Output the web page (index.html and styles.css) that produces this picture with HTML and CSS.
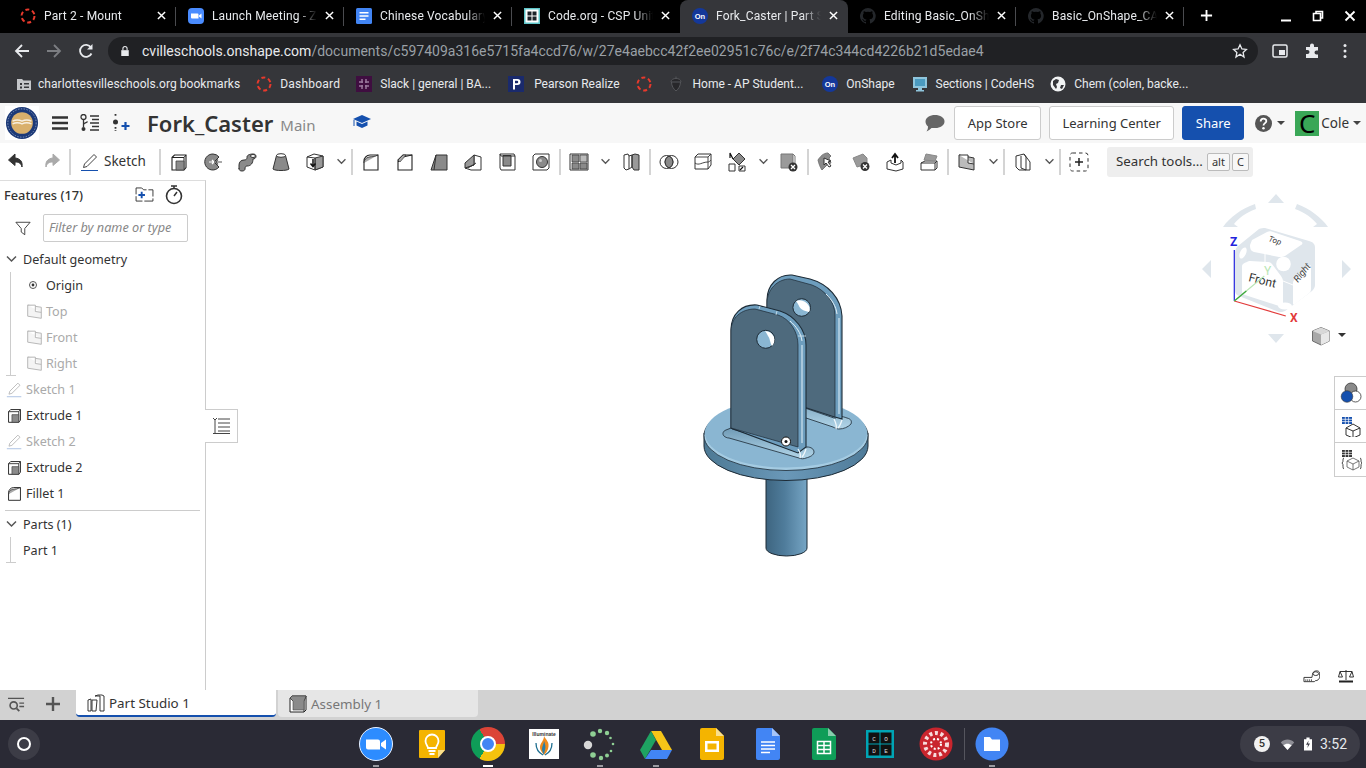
FILE: index.html
```html
<!DOCTYPE html>
<html lang="en">
<head>
<meta charset="utf-8">
<title>Fork_Caster | Part Studio 1</title>
<link rel="stylesheet" href="styles.css">
</head>
<body>
<svg class="defs" width="0" height="0">
  <defs>
    <symbol id="ring" viewBox="0 0 16 16"><circle cx="8" cy="8" r="6.5" fill="none" stroke="#e8392c" stroke-width="2" stroke-dasharray="4 2.8"/></symbol>
    <symbol id="on" viewBox="0 0 16 16"><circle cx="8" cy="8" r="8" fill="#14389a"/><text x="8" y="10.6" text-anchor="middle" class="ontext">On</text></symbol>
    <symbol id="gh" viewBox="0 0 16 16"><path fill="#24272b" d="M8 0a8 8 0 0 0-2.5 15.6c.4.1.5-.2.5-.4v-1.4c-2.200.5-2.700-1-2.700-1-.4-.9-.9-1.200-.9-1.200-.7-.5.1-.5.1-.5.8.1 1.200.8 1.200.8.7 1.200 1.900.9 2.300.7.1-.5.3-.9.5-1.100-1.800-.2-3.600-.9-3.600-4 0-.9.3-1.600.8-2.100-.1-.2-.4-1 .1-2.100 0 0 .7-.2 2.200.8a7.500 7.500 0 0 1 4 0c1.500-1 2.200-.8 2.200-.8.5 1.100.2 1.900.1 2.100.5.6.8 1.300.8 2.100 0 3.100-1.900 3.700-3.700 3.900.3.3.6.8.6 1.500v2.200c0 .2.100.5.500.4A8 8 0 0 0 8 0z"/></symbol>
    <symbol id="x" viewBox="0 0 10 10"><path d="M1 1l8 8M9 1l-8 8" stroke="#fff" stroke-width="1.600" fill="none"/></symbol>
    <symbol id="chev" viewBox="0 0 12 8"><path d="M1.500 1.500L6 6l4.500-4.500" fill="none" stroke="#555" stroke-width="1.500"/></symbol>
    <symbol id="plane" viewBox="0 0 20 20"><path d="M2 2.500l16 2.500v13L2 15.500z" fill="#e4e4e4" stroke="#333" stroke-width="1"/><path d="M2 2.500h9v7.500l7 1" fill="#fff" stroke="#333" stroke-width="1"/></symbol>
    <symbol id="pencil" viewBox="0 0 20 20"><path d="M3.500 15.500l1-3.500L14 2.500 16.500 5 7 14.500z" fill="none" stroke="#444" stroke-width="1"/><path d="M1 18.500h17" stroke="#1550ae" stroke-width="1"/></symbol>
    <symbol id="extr" viewBox="0 0 20 20"><path d="M3 5.500L5.500 3H17v12.500L15 18H3z" fill="#fff" stroke="#222" stroke-width="1.100"/><path d="M3 5.500h12V18M15 5.500L17 3" fill="none" stroke="#222" stroke-width="1"/><path d="M7 9h8v9H7z" fill="#8b8b8b" stroke="#444" stroke-width=".8"/></symbol>
    <symbol id="fillet" viewBox="0 0 20 20"><path d="M3 18V9c0-3 2.500-6 6-6h8v15z" fill="#fff" stroke="#222" stroke-width="1.100"/><path d="M3 11c0-3 1.500-5 5-6 3-.5 5 0 9-2" fill="#aaa" stroke="#222" stroke-width=".8"/></symbol>
  </defs>
</svg>

<div class="page">
  <header class="tabstrip">
    <div class="tab"><svg class="fav"><use href="#ring"/></svg><span class="tt">Part 2 - Mount</span><svg class="tx"><use href="#x"/></svg></div>
    <div class="tab"><svg class="fav" viewBox="0 0 16 16"><rect width="16" height="16" rx="4" fill="#4a8cff"/><path d="M3 5.500h6.500a1 1 0 0 1 1 1v4h-6.500a1 1 0 0 1-1-1zM11 7.500l2.500-2v5l-2.500-2z" fill="#fff"/></svg><span class="tt">Launch Meeting - Zoom</span><svg class="tx"><use href="#x"/></svg></div>
    <div class="tab"><svg class="fav" viewBox="0 0 16 16"><rect width="16" height="16" rx="1.500" fill="#4285f4"/><path d="M3.500 4h9v1.500h-9zM3.500 7.200h9v1.500h-9zM3.500 10.400h6v1.500h-6z" fill="#fff"/></svg><span class="tt">Chinese Vocabulary</span><svg class="tx"><use href="#x"/></svg></div>
    <div class="tab last-before"><svg class="fav" viewBox="0 0 16 16"><rect width="16" height="16" fill="#5fc5c9"/><rect x="1.500" y="1.500" width="13" height="13" fill="#fff"/><path d="M3.500 3.500h4v4h-4zM8.500 3.500h4v4h-4zM3.500 8.500h4v4h-4zM8.500 8.500h4v4h-4z" fill="#1c2228"/></svg><span class="tt">Code.org - CSP Unit 5</span><svg class="tx"><use href="#x"/></svg></div>
    <div class="tab active"><svg class="fav"><use href="#on"/></svg><span class="tt">Fork_Caster | Part Studio</span><svg class="tx"><use href="#x"/></svg></div>
    <div class="tab"><svg class="fav"><use href="#gh"/></svg><span class="tt">Editing Basic_OnShape</span><svg class="tx"><use href="#x"/></svg></div>
    <div class="tab"><svg class="fav"><use href="#gh"/></svg><span class="tt">Basic_OnShape_CAD</span><svg class="tx"><use href="#x"/></svg></div>
    <svg class="newtab" viewBox="0 0 14 14"><path d="M7 1v12M1 7h12" stroke="#fff" stroke-width="2"/></svg>
    <div class="winctl">
      <svg viewBox="0 0 12 12"><path d="M1 10.500h10" stroke="#fff" stroke-width="2"/></svg>
      <svg viewBox="0 0 12 12"><path d="M1.500 3.500h7v7h-7zM4 3V1.500h6.500V8H9" fill="none" stroke="#fff" stroke-width="1.600"/></svg>
      <svg viewBox="0 0 12 12"><path d="M1.500 1.500l9 9M10.500 1.500l-9 9" stroke="#fff" stroke-width="1.800"/></svg>
    </div>
  </header>

  <nav class="omnirow">
    <svg class="nav" viewBox="0 0 16 16"><path d="M15 8H2M8 2L2 8l6 6" fill="none" stroke="#e8eaed" stroke-width="1.800"/></svg>
    <svg class="nav" viewBox="0 0 16 16"><path d="M1 8h13M8 2l6 6-6 6" fill="none" stroke="#7c7e82" stroke-width="1.800"/></svg>
    <svg class="nav" viewBox="0 0 16 16"><path d="M13.500 10.500A6 6 0 1 1 13 4.500" fill="none" stroke="#e8eaed" stroke-width="1.800"/><path d="M14.500 1v5.500H9z" fill="#e8eaed"/></svg>
    <div class="omni">
      <svg class="lock" viewBox="0 0 12 14"><path d="M1.500 6h9v7h-9z" fill="#e8eaed"/><path d="M3.500 6V4a2.500 2.500 0 0 1 5 0v2" fill="none" stroke="#e8eaed" stroke-width="1.300"/></svg>
      <span class="url"><b>cvilleschools.onshape.com</b>/documents/c597409a316e5715fa4ccd76/w/27e4aebcc42f2ee02951c76c/e/2f74c344cd4226b21d5edae4</span>
      <svg class="star" viewBox="0 0 16 16"><path d="M8 1.800l1.900 4.100 4.500.5-3.300 3.100.9 4.500L8 11.300l-4 2.700.9-4.500L1.600 6.400l4.500-.5z" fill="none" stroke="#e8eaed" stroke-width="1.300"/></svg>
    </div>
    <svg class="ext media" viewBox="0 0 16 16"><rect x="1" y="2" width="14" height="12" rx="1.500" fill="none" stroke="#e8eaed" stroke-width="1.500"/><rect x="7" y="7" width="6" height="5" fill="#e8eaed"/></svg>
    <svg class="ext puzzle" viewBox="0 0 16 16"><path d="M6 2.500a2 2 0 0 1 4 0V4h4v3.500h-1.500a2 2 0 0 0 0 4H14V15H2v-4h1.500a2 2 0 0 0 0-4H2V4h4z" fill="#e8eaed"/></svg>
    <svg class="ext dots" viewBox="0 0 4 16"><circle cx="2" cy="2.500" r="1.500" fill="#e8eaed"/><circle cx="2" cy="8" r="1.500" fill="#e8eaed"/><circle cx="2" cy="13.500" r="1.500" fill="#e8eaed"/></svg>
  </nav>

  <nav class="bookmarks">
    <div class="bm folder"><svg class="fav" viewBox="0 0 16 16"><path d="M1 3h5l1.500 1.500H15V14H1z" fill="#c4c6c9"/><path d="M4 7h2v2H4zM4 10.500h2v2H4zM8 7h5v1.500H8zM8 10.500h5V12H8z" fill="#35363a"/></svg><span>charlottesvilleschools.org bookmarks</span></div>
    <div class="bm dash"><svg class="fav"><use href="#ring"/></svg><span>Dashboard</span></div>
    <div class="bm"><svg class="fav" viewBox="0 0 16 16"><rect width="16" height="16" fill="#3f0e40"/><path d="M6 3v4M6 9v4M10 3v4M10 9v4M3 6h4M9 6h4M3 10h4M9 10h4" stroke="#9a7a9d" stroke-width="1.500"/></svg><span>Slack | general | BA...</span></div>
    <div class="bm pearson"><svg class="fav" viewBox="0 0 16 16"><rect width="16" height="16" fill="#1a2a6c"/><path d="M5 3h4.500a3 3 0 0 1 0 6H7v4.500H5zM7 4.800v2.500h2a1.200 1.200 0 0 0 0-2.500z" fill="#fff"/></svg><span>Pearson Realize</span></div>
    <div class="bm"><svg class="fav"><use href="#ring"/></svg></div>
    <div class="bm home"><svg class="fav" viewBox="0 0 16 16"><path d="M3 6c0-2.500 2.500-3.500 5-3.500S13 3.500 13 6M3.500 6h9c0 4-2 7-4.500 9-2.500-2-4.500-5-4.500-9zM8 .5v2" fill="#27272a" stroke="#55565a" stroke-width="1"/></svg><span>Home - AP Student...</span></div>
    <div class="bm onshape"><svg class="fav"><use href="#on"/></svg><span>OnShape</span></div>
    <div class="bm codehs"><svg class="fav" viewBox="0 0 16 16"><rect x="1" y="1" width="14" height="11" fill="#8fc5dc"/><path d="M3 3h10v7H3z" fill="#4b9bc0"/><path d="M6 12h4v2h2v1.500H4V14h2z" fill="#8fc5dc"/></svg><span>Sections | CodeHS</span></div>
    <div class="bm"><svg class="fav" viewBox="0 0 16 16"><circle cx="8" cy="8" r="7.500" fill="#f1f3f4"/><path d="M3 5l3-2 3 1-1 3-2 1 1 3-1 2-3-4zM11 9l3 0-2 4-2-1z" fill="#35363a"/></svg><span>Chem (colen, backe...</span></div>
  </nav>

  <div class="appbar">
    <svg class="logo" viewBox="0 0 36 36"><rect width="36" height="36" fill="#fff"/><circle cx="18" cy="18" r="17" fill="#1d3a78"/><circle cx="18" cy="18" r="15" fill="none" stroke="#9fb0cf" stroke-width=".8" stroke-dasharray="1.500 1.500"/><circle cx="18" cy="18" r="11.500" fill="#d9b06c"/><path d="M8 16c3-1.500 7-1.500 10 0 3-1.500 7-1.500 10 0M8 19c3-1.500 7-1.500 10 0 3-1.500 7-1.500 10 0" stroke="#f7efe0" stroke-width="1.500" fill="none"/></svg>
    <svg class="menu" viewBox="0 0 16 14"><path d="M0 1.500h16M0 7h16M0 12.500h16" stroke="#333" stroke-width="2.600"/></svg>
    <svg class="branch" viewBox="0 0 20 18"><circle cx="3.500" cy="3" r="2.500" fill="none" stroke="#333" stroke-width="1.300"/><circle cx="3.500" cy="15" r="2" fill="#333"/><path d="M3.500 5.500V13M3.500 11c0-2.500 3-1.500 4-3.500M10 2h9M10 9h9M10 16h9M12 5.500h7M12 12.500h7" fill="none" stroke="#333" stroke-width="1.300"/></svg>
    <svg class="addfeat" viewBox="0 0 18 18"><circle cx="2.500" cy="8" r="2.500" fill="#333"/><path d="M2.500 0v3M2.500 13v4" stroke="#333" stroke-width="1.800" stroke-dasharray="1.800 1.400"/><path d="M12.500 8v8M8.500 12h8" stroke="#1550ae" stroke-width="2.200"/></svg>
    <h1 class="title">Fork_Caster</h1>
    <span class="branchname">Main</span>
    <svg class="cap" viewBox="0 0 18 16"><path d="M9 1l9 4-9 4-9-4z" fill="#1550ae"/><path d="M3.500 7.500v4L9 14l5.500-2.500v-4L9 10z" fill="#1550ae"/><path d="M1 6v6" stroke="#1550ae" stroke-width="1"/></svg>
    <div class="appright">
      <svg class="chat" viewBox="0 0 20 18"><path d="M10 1c5 0 9.500 2.500 9.500 6.500S15 14 10.500 14c-1.500 0-3 0-4 0-1.500 1.500-3 2.800-5 3.500 1-1.500 1.500-3 1.500-5C1.500 11.300.500 9.500.500 7.500.500 3.500 5 1 10 1z" fill="#666"/></svg>
      <button class="btn">App Store</button>
      <button class="btn">Learning Center</button>
      <button class="btn share">Share</button>
      <svg class="help" viewBox="0 0 18 18"><circle cx="9" cy="9" r="9" fill="#555"/><path d="M6 7c0-4 6-4 6-.5 0 2-3 2.200-3 4.500" fill="none" stroke="#fff" stroke-width="1.900"/><circle cx="9" cy="14" r="1.300" fill="#fff"/></svg>
      <i class="caret"></i>
      <span class="avatar">C</span>
      <span class="user">Cole</span>
      <i class="caret"></i>
    </div>
  </div>

  <div class="toolbar">
    <div class="tb"><svg viewBox="0 0 20 20"><path d="M8 2L1.500 8 8 13.500V10c3.500 0 6 1 7 5 .8-5-1.500-8.500-7-9z" fill="#333" stroke="#333"/></svg></div>
    <div class="tb"><svg viewBox="0 0 20 20"><path d="M12 2l6.500 6-6.500 5.500V10c-3.500 0-6 1-7 5-.8-5 1.500-8.500 7-9z" fill="#aaa" stroke="#aaa"/></svg></div>
    <i class="sep"></i>
    <div class="tb sketch"><svg><use href="#pencil"/></svg><span>Sketch</span></div>
    <i class="sep"></i>
    <div class="tb"><svg><use href="#extr"/></svg></div>
    <div class="tb"><svg viewBox="0 0 20 20"><path d="M10 2a8 8 0 1 0 6 13l-5-5 5-5a8 8 0 0 0-6-3z" fill="#8a8a8a" stroke="#333"/><path d="M12 10h7M15 7.500L12.500 10l2.500 2.500" fill="none" stroke="#555" stroke-width="1.100"/><path d="M6 10h5M9 8l2 2-2 2" fill="none" stroke="#fff" stroke-width="1.200"/></svg></div>
    <div class="tb"><svg viewBox="0 0 20 20"><path d="M2 17v-4c0-3 2-5 5-5 3 0 3-2 3-3 0-2 3-3 6-3 2 0 3 1 3 2.500 0 1.500-1.500 2.500-3 2.500 0 4-2 7-6 7-1.500 0-2 1-2 3 0 1-1 2-3 2s-3-1-3-2.500z" fill="#8a8a8a" stroke="#333"/><ellipse cx="16" cy="4" rx="2.500" ry="1.500" fill="#fff" stroke="#333"/></svg></div>
    <div class="tb"><svg viewBox="0 0 20 20"><path d="M5.500 3.500L2 17c2 2 14 2 16 0L14.500 3.500z" fill="#8a8a8a" stroke="#333"/><ellipse cx="10" cy="3.500" rx="4.500" ry="1.800" fill="#fff" stroke="#333"/></svg></div>
    <div class="tb"><svg viewBox="0 0 20 20"><path d="M2 5l7-3 9 2v11l-8 3-8-3z" fill="#fff" stroke="#333"/><path d="M10 6l8-2v11l-8 3z" fill="#999" stroke="#333"/><path d="M2 5l8 1v12" fill="none" stroke="#333"/><path d="M8 7v7M5.500 11.500L8 14.500l2.500-3" fill="none" stroke="#111" stroke-width="1.500"/></svg></div>
    <div class="tc"><svg><use href="#chev"/></svg></div>
    <i class="sep"></i>
    <div class="tb"><svg><use href="#fillet"/></svg></div>
    <div class="tb"><svg viewBox="0 0 20 20"><path d="M3 18V8l5-5h9v15z" fill="#fff" stroke="#222" stroke-width="1.100"/><path d="M3 10l5-5 9-2" fill="none" stroke="#222"/><path d="M3 8l5-5h3L5 10z" fill="#aaa" stroke="#222" stroke-width=".6"/></svg></div>
    <div class="tb"><svg viewBox="0 0 20 20"><path d="M2 18L7 3h11v15z" fill="#8a8a8a" stroke="#333"/><path d="M7 3l-2 15" stroke="#333" fill="none"/></svg></div>
    <div class="tb"><svg viewBox="0 0 20 20"><path d="M2 16l9-3V3l7 2v13H8z" fill="#fff" stroke="#333"/><path d="M11 3l-9 8v5l9-3zM5 16l8-5" fill="#999" stroke="#333"/></svg></div>
    <div class="tb"><svg viewBox="0 0 20 20"><path d="M3 2h14l1 2v14H4l-1-2z" fill="#fff" stroke="#333"/><path d="M6 3.500h8V14H6z" fill="#8a8a8a" stroke="#333"/><path d="M3 2l1 2h14" fill="none" stroke="#333"/></svg></div>
    <div class="tb"><svg viewBox="0 0 20 20"><path d="M2 4l2-2h14v14l-2 2H2z" fill="#fff" stroke="#333"/><circle cx="11" cy="10" r="5.500" fill="#8a8a8a" stroke="#333"/><circle cx="9.500" cy="8.500" r="1.500" fill="#ccc"/></svg></div>
    <i class="sep"></i>
    <div class="tb"><svg viewBox="0 0 20 20"><path d="M1 2h18v16H1z" fill="#fff" stroke="#333"/><path d="M3 3h7v7H3zM3 11h7v6H3zM11 11h7v6h-7z" fill="#8a8a8a" stroke="#333" stroke-width=".7"/><path d="M11 3h7v7h-7z" fill="#bbb" stroke="#333" stroke-width=".7"/></svg></div>
    <div class="tc"><svg><use href="#chev"/></svg></div>
    <div class="tb"><svg viewBox="0 0 20 20"><path d="M3 3l4-1 1 2v13l-3 1-2-2z" fill="#fff" stroke="#333"/><path d="M11 3l3-1 4 1v15h-5l-2-3z" fill="#999" stroke="#333"/><path d="M8 4l3-1v12l-3 2" fill="none" stroke="#333"/></svg></div>
    <i class="sep"></i>
    <div class="tb"><svg viewBox="0 0 20 20"><circle cx="7.500" cy="10" r="6.500" fill="#fff" stroke="#333"/><circle cx="12.500" cy="10" r="6.500" fill="none" stroke="#333"/><path d="M10 4a6.500 6.500 0 0 1 0 12 6.500 6.500 0 0 1 0-12z" fill="#8a8a8a" stroke="#333"/></svg></div>
    <div class="tb"><svg viewBox="0 0 20 20"><path d="M2 5l3-3h13v11l-3 4H2z" fill="#fff" stroke="#333"/><path d="M2 5h13v12M15 5l3-3M2 11c4 3 7-1 13-1 1 0 2-1 3-2" fill="none" stroke="#333" stroke-width=".9"/></svg></div>
    <div class="tb"><svg viewBox="0 0 20 20"><path d="M12 1l6 6-6 6-6-6z" fill="#8a8a8a" stroke="#333"/><path d="M2 12h6v7H2zM12 14h6v5h-6z" fill="#fff" stroke="#333"/><path d="M6 7L3 1v5M13 18l3-3" fill="none" stroke="#111" stroke-width="1.200"/></svg></div>
    <div class="tc"><svg><use href="#chev"/></svg></div>
    <div class="tb"><svg viewBox="0 0 20 20"><path d="M2 2h12v14H2z" fill="#9a9a9a" stroke="#777"/><path d="M14 2l2 2v8" fill="none" stroke="#777"/><circle cx="14" cy="15" r="4.500" fill="#333"/><path d="M12 13l4 4M16 13l-4 4" stroke="#fff" stroke-width="1.300"/></svg></div>
    <i class="sep"></i>
    <div class="tb"><svg viewBox="0 0 20 20"><path d="M1 8c2-3 5-7 10-7l3 3-2 2 2 5-3 1-3 3-3 3C3 15 2 12 1 8z" fill="#8a8a8a" stroke="#777"/><path d="M7 6l7 3-3 1 3 4-2 1-3-4-2 2z" fill="#fff" stroke="#333"/></svg></div>
    <div class="tb"><svg viewBox="0 0 20 20"><path d="M2 6l10-4 4 4 0 6-10 3z" fill="#9a9a9a" stroke="#888"/><circle cx="14" cy="14.500" r="4.500" fill="#333"/><path d="M12 12.500l4 4M16 12.500l-4 4" stroke="#fff" stroke-width="1.300"/></svg></div>
    <div class="tb"><svg viewBox="0 0 20 20"><path d="M2 10l4-2v3l5 2 5-2V8l2 2v7l-7 2-9-2z" fill="#fff" stroke="#333"/><path d="M10 11V3M7 6l3-4 3 4" fill="none" stroke="#111" stroke-width="1.800"/></svg></div>
    <div class="tb"><svg viewBox="0 0 20 20"><path d="M2 11l4-2h12v7l-2 2H2z" fill="#fff" stroke="#333"/><path d="M2 11h14v7M16 11l2-2" fill="none" stroke="#333"/><path d="M5 8l2-6 11 2-2 5z" fill="#9a9a9a" stroke="#888"/></svg></div>
    <i class="sep"></i>
    <div class="tb"><svg viewBox="0 0 20 20"><path d="M2 3l15 3v12L2 15z" fill="#bbb" stroke="#333"/><path d="M2 3h9v8l6 1" fill="#fff" stroke="#333"/></svg></div>
    <div class="tc"><svg><use href="#chev"/></svg></div>
    <i class="sep"></i>
    <div class="tb"><svg viewBox="0 0 20 20"><path d="M3 4l8-2 2 3v13H6l-3-3z" fill="#fff" stroke="#333"/><path d="M8 4v12l5 2M11 2l6 8v8h-4" fill="none" stroke="#333"/></svg></div>
    <div class="tc"><svg><use href="#chev"/></svg></div>
    <i class="sep"></i>
    <div class="tb"><svg viewBox="0 0 20 20"><rect x="1" y="1" width="18" height="18" rx="2.500" fill="none" stroke="#333" stroke-dasharray="3.500 3"/><path d="M10 6v8M6 10h8" stroke="#222" stroke-width="1.500"/></svg></div>
    <div class="search"><span>Search tools...</span><kbd>alt</kbd><kbd>C</kbd></div>
  </div>

  <div class="main">
    <aside class="panel">
      <div class="phead">
        <strong>Features (17)</strong>
        <svg class="newfolder" viewBox="0 0 20 16"><path d="M1 1h6l2 2h10v12H1z" fill="none" stroke="#333" stroke-dasharray="12 2"/><path d="M7 5v7M3.500 8.500h7" stroke="#1550ae" stroke-width="2"/></svg>
        <svg class="timer" viewBox="0 0 18 20"><circle cx="9" cy="11" r="7.500" fill="none" stroke="#333" stroke-width="1.600"/><path d="M6 1h6M9 1v3M9 11l3-4" fill="none" stroke="#333" stroke-width="1.500"/></svg>
      </div>
      <div class="filter">
        <svg viewBox="0 0 18 16"><path d="M1 1h16l-6 7v7l-4-3V8z" fill="none" stroke="#333"/></svg>
        <div class="finput">Filter by name or type</div>
      </div>
      <div class="row head"><svg class="rchev"><use href="#chev"/></svg>Default geometry</div>
      <div class="tree">
        <div class="row sub"><svg class="rico origin" viewBox="0 0 10 10"><circle cx="5" cy="5" r="3.500" fill="none" stroke="#555"/><circle cx="5" cy="5" r="1.400" fill="#333"/></svg>Origin</div>
        <div class="row sub off"><svg class="rico"><use href="#plane"/></svg>Top</div>
        <div class="row sub off"><svg class="rico"><use href="#plane"/></svg>Front</div>
        <div class="row sub off"><svg class="rico"><use href="#plane"/></svg>Right</div>
      </div>
      <div class="row feat off"><svg class="rico"><use href="#pencil"/></svg>Sketch 1</div>
      <div class="row feat"><svg class="rico"><use href="#extr"/></svg>Extrude 1</div>
      <div class="row feat off"><svg class="rico"><use href="#pencil"/></svg>Sketch 2</div>
      <div class="row feat"><svg class="rico"><use href="#extr"/></svg>Extrude 2</div>
      <div class="row feat"><svg class="rico"><use href="#fillet"/></svg>Fillet 1</div>
      <div class="divider"></div>
      <div class="row head"><svg class="rchev"><use href="#chev"/></svg>Parts (1)</div>
      <div class="tree"><div class="row part">Part 1</div></div>
    </aside>
    <section class="viewport">
      <div class="collapse"><svg viewBox="0 0 18 18"><path d="M1 1l2 2 2-2M3 3v13M6 2h12M6 6h12M6 10h12M6 14h12M1 16.500h17" fill="none" stroke="#444"/></svg></div>

      <svg class="model" viewBox="700 270 172 290">
        <defs>
          <linearGradient id="cyl"><stop offset="0" stop-color="#3e6580"/><stop offset=".45" stop-color="#4f7c9b"/><stop offset="1" stop-color="#76a5c4"/></linearGradient>
          <linearGradient id="rim"><stop offset="0" stop-color="#4d7994"/><stop offset=".5" stop-color="#6a98b8"/><stop offset="1" stop-color="#4f7b99"/></linearGradient>
          <linearGradient id="fil" x1="0" y1="0" x2="0" y2="1"><stop offset="0" stop-color="#6f9ab5"/><stop offset="1" stop-color="#b3d6e9"/></linearGradient>
        </defs>
        <path d="M766 470v78a20.500 8 0 0 0 41 0v-78z" fill="url(#cyl)" stroke="#1c2a35"/>
        <path d="M704 433v13a82 34.500 0 0 0 164 0v-13z" fill="url(#rim)" stroke="#1c2a35"/>
        <ellipse cx="786" cy="435.500" rx="82" ry="35" fill="#a4cbe2" stroke="#1c2a35" stroke-width=".8"/>
        <ellipse cx="786" cy="433" rx="81" ry="34.500" fill="#8ab6d2"/>
        <!-- back plate -->
        <path d="M767 395l67 23 2 0c2-2 6-2 11 0 4 1 5 3 4 6-3 3-7 5-12 5-2 0-4-1-6-2l-66-22z" fill="url(#fil)" stroke="#1c2a35" stroke-width=".8"/>
        <path d="M767 395V300c0-15 11-26 25-25l18 4c18 5 31 19 32 37v103l-7-2z" fill="#6d9dbd" stroke="#1c2a35" stroke-width="1.100"/>
        <path d="M767 395V303c0-13 10-24 23-24l22 6c13 5 23 17 23 30v102z" fill="#4e6a7d" stroke="#1c2a35" stroke-width=".7"/>
        <path d="M826 294c6 6 10 12 11 20M839 318v96" fill="none" stroke="#e4f1f8" stroke-width="1"/>
        <path d="M834 419c2 4 3 7 2 10M842 420c-1 3-2 6-4 8" fill="none" stroke="#f0f7fb" stroke-width="1.300"/>
        <circle cx="801.700" cy="307.500" r="8.800" fill="#8ab6d2" stroke="#1c2a35"/>
        <path d="M796 301c5-2 10 0 13 5 1 3 1 5 0 6-5-1-9-3-10-6-1-2-2-4-3-5z" fill="#fff"/>
        <!-- front plate fillet -->
        <path d="M731 428l-5 2c-3 1-4 4-2 6 1 1 3 2 5 2l70 20c2 1 5 1 7 0 4-1 8-3 8-6 0-3-3-5-7-5l-8 1-67-19z" fill="url(#fil)" stroke="#1c2a35" stroke-width=".8"/>
        <path d="M731 428V330c0-16 11-26 26-25l23 6c15 5 26 19 26 34v102l-8 6z" fill="#6d9dbd" stroke="#1c2a35" stroke-width="1.100"/>
        <path d="M731 428V331c0-13 10-22 24-22l23 6c12 4 20 17 20 30v102z" fill="#4e6a7d" stroke="#1c2a35" stroke-width=".7"/>
        <path d="M790 321c6 5 11 12 12 20M802 345v98" fill="none" stroke="#e4f1f8" stroke-width="1"/>
        <path d="M798 449c2 3 3 6 2 9M806 449c-1 3-2 6-4 8" fill="none" stroke="#f0f7fb" stroke-width="1.300"/>
        <path d="M777 311l-1 4M760 306l-1 3M798 336l8 0" stroke="#d6e8f2" stroke-width=".8"/>
        <circle cx="765.700" cy="339.300" r="9" fill="#8ab6d2" stroke="#1c2a35"/>
        <path d="M765 331c4 0 7 2 9 6 1 4 0 7-2 9-2-3-2-8-4-10-1-2-2-4-3-5z" fill="#fff"/>
        <circle cx="786" cy="441.500" r="4.500" fill="#fff" stroke="#111"/>
        <circle cx="786" cy="441.500" r="1.500" fill="#111"/>
      </svg>

      <svg class="cube" viewBox="1195 190 171 170">
        <path d="M1276 194l8 9h-16zM1202 269l9-9v18zM1351 269l-9-9v18zM1276 343l-8-9h16z" fill="#dfe6ec"/>
        <path d="M1223 227c7-10 18-18 32-23l1 5c-11 4-17 9-22 15l4 3z M1328 227c-7-10-18-18-31-23l-2 5c11 4 17 9 22 15l-4 3z" fill="#dfe6ec"/>
        <path d="M1235 253c0-3 1-5 3-7l21-17c2-1 4-1 6-1l44 13c4 1 6 3 6 7v37c0 2-1 4-3 6l-27 20c-2 1-4 1-6 1l-40-16c-3-1-4-3-4-6z" fill="#dfe6ec"/>
        <path d="M1247 262c1-1 2-1 3-1l17 1c2 0 3 0 5 2l9 12c1 2 2 3 2 5v22c0 3-1 4-4 3l-34-11c-2-1-3-2-3-4l0-25c0-2 2-3 5-4zM1252 240l15-8c2-1 4-1 6 0l27 9c3 1 3 3 1 4l-16 11c-2 1-4 1-6 1l-25-5c-3-1-4-3-4-7zM1311 267c0-2-1-2-2-1l-14 13c-1 1-2 2-2 4v20c0 2 1 2 2 1l13-10c2-1 3-3 3-5z" fill="#fff"/>
        <path d="M1265 252v10M1283 281l10 4" stroke="#fff" stroke-width="1"/>
        <circle cx="1283.500" cy="264" r="7.300" fill="#fff"/><ellipse cx="1285" cy="306" rx="7" ry="3.500" fill="#fff"/><ellipse cx="1243" cy="253" rx="3" ry="6" fill="#fff" transform="rotate(25 1243 253)"/>
        <text class="cf" transform="translate(1248 281) rotate(14)">Front</text>
        <text class="ct" transform="translate(1268 241) rotate(18)">Top</text>
        <text class="cr" transform="translate(1298 283) rotate(-52)">Right</text>
        <path d="M1234.300 301V250" stroke="#2222dd" stroke-width="1.200"/>
        <path d="M1234.300 301l51.500 15" stroke="#e23a3a" stroke-width="1.200"/>
        <path d="M1234.300 301l30-25" stroke="#b9e6b4" stroke-width="1.100"/>
        <path d="M1234.300 301l12-10" stroke="#3aa63a" stroke-width="1.100"/>
        <text class="az" x="1230" y="246">Z</text>
        <text class="ax" x="1290" y="322">X</text>
        <text class="ay" x="1264" y="275">Y</text>
        <path d="M1312.500 331l8.500-3.500 8.500 3.500v10l-8.500 4-8.500-4z" fill="#a8a8a8" stroke="#555" stroke-width=".8"/>
        <path d="M1321 334.500l8.500-3.500v10l-8.500 4z" fill="#e8e8e8"/><path d="M1312.500 331l8.500 3.500 8.500-3.500-8.500-3.500z" fill="#d8d8d8"/>
        <path d="M1338 333h8l-4 4z" fill="#333"/>
      </svg>

      <div class="sidetools">
        <div class="st"><svg viewBox="0 0 22 22"><circle cx="11" cy="7" r="6" fill="#8a8a8a" stroke="#333" stroke-width=".8"/><circle cx="15.500" cy="14.500" r="5.500" fill="#fff" stroke="#333" stroke-width=".8"/><circle cx="7" cy="14.500" r="5.800" fill="#1550ae" stroke="#333" stroke-width=".6"/></svg></div>
        <div class="st"><svg viewBox="0 0 22 22"><path d="M2 2h10v7H2z" fill="#1550ae"/><path d="M2 4.300h10M2 6.600h10M5.300 2v7M8.600 2v7" stroke="#fff" stroke-width=".7"/><path d="M6 13l7-4 7 4v7l-7 3-7-3zM6 13l7 3 7-3M13 16v7" fill="none" stroke="#333"/></svg></div>
        <div class="st"><svg viewBox="0 0 22 22"><path d="M2 1h10v7H2z" fill="#333"/><path d="M2 3.300h10M2 5.600h10M5.300 1v7M8.600 1v7" stroke="#fff" stroke-width=".7"/><path d="M7 12l6-3 6 3v6l-6 3-6-3zM7 12l6 3 6-3M13 15v6" fill="none" stroke="#555" stroke-width=".8"/><path d="M4 9c-2 0 0 4-2 5 2 1 0 6 2 6M20 9c2 0 0 4 2 5-2 1 0 6-2 6" fill="none" stroke="#333" stroke-width=".9"/></svg></div>
      </div>

      <svg class="tape" viewBox="0 0 18 14"><path d="M1 13V8.500h8.500C10 6 10 4 11 3c1.500-2 6-2 6.500.5.200 1 .2 4 0 5-.3 2-2 3.500-4.500 3.500l-1 1z" fill="#fff" stroke="#333"/><ellipse cx="13.500" cy="4.500" rx="3" ry="2" fill="none" stroke="#333"/><path d="M3 10.500v2M5 10.500v2M7 10.500v2M9 10.500v2" stroke="#333" stroke-width=".8"/></svg>
      <svg class="scale" viewBox="0 0 16 14"><path d="M8 1v10M2 2.500h12M2 2.500L0.500 8h4zM14 2.500L11.500 8h4z" fill="none" stroke="#333"/><path d="M1 12.500h14" stroke="#222" stroke-width="2"/></svg>
    </section>
  </div>

  <footer class="doctabs">
    <svg class="dt-search" viewBox="0 0 18 16"><path d="M0 1h17M12 6h5M12 9.500h5" stroke="#555" stroke-width="1.500"/><circle cx="6" cy="8.500" r="3.800" fill="none" stroke="#555" stroke-width="1.700"/><path d="M9 11.500l3 3" stroke="#555" stroke-width="1.900"/></svg>
    <svg class="dt-plus" viewBox="0 0 16 16"><path d="M8 1v14M1 8h14" stroke="#555" stroke-width="2.400"/></svg>
    <div class="dtab current"><svg viewBox="0 0 18 18"><path d="M1 6l3-1v12H1zM5 6h5l-1 11H5zM8 2l3-1h4l2 1v15h-4V2z" fill="#fff" stroke="#222" stroke-width=".9"/></svg><span>Part Studio 1</span></div>
    <div class="dtab"><svg viewBox="0 0 18 18"><path d="M1 3l2-2h14v14l-2 2H1z" fill="#fff" stroke="#222"/><path d="M1 3l3 3h11v11M15 6l2-5" fill="none" stroke="#222"/><path d="M1 3l3 3v9h11V6L17 1H3z" fill="#8a8a8a" stroke="#444" stroke-width=".6"/></svg><span>Assembly 1</span></div>
  </footer>

  <footer class="shelf">
    <div class="launcher"><i></i></div>
    <div class="apps">
      <div class="app on"><svg viewBox="0 0 34 34"><circle cx="17" cy="17" r="16.500" fill="#2d8cff" stroke="#e8f1ff"/><path d="M7 12.500h12a2 2 0 0 1 2 2v8H9a2 2 0 0 1-2-2zM22 16l5-3.500v10L22 19z" fill="#fff"/></svg></div>
      <div class="app"><svg viewBox="0 0 34 34"><path d="M5 3h24a1 1 0 0 1 1 1v19l-7 8H5a1 1 0 0 1-1-1V4a1 1 0 0 1 1-1z" fill="#f4b400"/><path d="M30 23h-7v8z" fill="#f9df8e"/><path d="M13 21c0-2.500-2.500-3-2.500-7a6.500 6.500 0 0 1 13 0c0 4-2.500 4.500-2.500 7zM13.500 24h7M14.500 27h5" fill="none" stroke="#fff" stroke-width="1.800"/></svg></div>
      <div class="app running"><div class="chrome"><i></i></div></div>
      <div class="app"><svg viewBox="0 0 34 34"><rect x="2" y="2" width="30" height="30" fill="#fff"/><text class="illum" x="17" y="9">Illuminate</text><path d="M17 9c2 4 6 6 4 13-1 3-3 5-4 6-1-2-4-4-4-8 0-4 4-6 4-11z" fill="#ee8a1d"/><path d="M17 14c1 3 2 5 1 9-.5 2-1 3-1 5-1-2-2-4-2-6 0-3 2-5 2-8z" fill="#2a7fa8"/><path d="M9 16c0 6 3 10 7 12M25 16c0 6-3 10-7 12" fill="none" stroke="#1f6f90" stroke-width="1.300"/></svg></div>
      <div class="app on"><svg viewBox="0 0 34 34"><g fill="#8fcf94"><circle cx="17" cy="4" r="2.200"/><circle cx="24" cy="6" r="2.200"/><circle cx="10" cy="7" r="2.800"/><circle cx="27.500" cy="11" r="1.300"/><circle cx="30" cy="17" r="1.300"/><circle cx="28" cy="24" r="1.300"/><circle cx="24" cy="28.500" r="2"/><circle cx="18" cy="31" r="2.200"/><circle cx="10" cy="28" r="2.800"/></g><circle cx="5" cy="18" r="4.200" fill="#d8d8d8"/></svg></div>
      <div class="app on"><svg viewBox="0 0 34 34"><path d="M12 4h10l11 19H23z" fill="#f5c518"/><path d="M12 4L1 23l5 9 11-19z" fill="#1ea362"/><path d="M6 32h22l5-9H12z" fill="#4285f4"/></svg></div>
      <div class="app"><svg viewBox="0 0 34 34"><path d="M7 1h14l8 8v22a2 2 0 0 1-2 2H7a2 2 0 0 1-2-2V3a2 2 0 0 1 2-2z" fill="#f4b400"/><path d="M21 1l8 8h-8z" fill="#f9df8e"/><path d="M10 14h14v11H10z" fill="#fff"/><path d="M12.500 16.500h9v6h-9z" fill="#f4b400"/></svg></div>
      <div class="app"><svg viewBox="0 0 34 34"><path d="M7 1h14l8 8v22a2 2 0 0 1-2 2H7a2 2 0 0 1-2-2V3a2 2 0 0 1 2-2z" fill="#4285f4"/><path d="M21 1l8 8h-8z" fill="#a6c5fa"/><path d="M10 15h14M10 18.500h14M10 22h14M10 25.500h9" stroke="#fff" stroke-width="1.700"/></svg></div>
      <div class="app"><svg viewBox="0 0 34 34"><path d="M7 1h14l8 8v22a2 2 0 0 1-2 2H7a2 2 0 0 1-2-2V3a2 2 0 0 1 2-2z" fill="#0f9d58"/><path d="M21 1l8 8h-8z" fill="#87ceac"/><path d="M10.500 14.500h13v12h-13zM10.500 18.500h13M10.500 22.500h13M17 14.500v12" fill="none" stroke="#fff" stroke-width="1.500"/></svg></div>
      <div class="app"><svg viewBox="0 0 34 34"><rect x="3" y="3" width="28" height="28" fill="#00a5b5"/><rect x="5.500" y="5.500" width="11" height="11" fill="#111"/><rect x="17.500" y="5.500" width="11" height="11" fill="#111"/><rect x="5.500" y="17.500" width="11" height="11" fill="#111"/><rect x="17.500" y="17.500" width="11" height="11" fill="#111"/><text class="cd" x="11" y="14">C</text><text class="cd" x="23" y="14">O</text><text class="cd" x="11" y="26">D</text><text class="cd" x="23" y="26">E</text></svg></div>
      <div class="app"><svg viewBox="0 0 34 34"><circle cx="17" cy="17" r="16.500" fill="#c9252d"/><circle cx="17" cy="17" r="11" fill="none" stroke="#f7dcdc" stroke-width="4" stroke-dasharray="3 2.600"/><circle cx="17" cy="17" r="5" fill="none" stroke="#fff" stroke-width="2" stroke-dasharray="2 2"/></svg></div>
      <i class="shelfsep"></i>
      <div class="app on"><svg viewBox="0 0 34 34"><circle cx="17" cy="17" r="16.500" fill="#4285f4"/><path d="M9 10h6l2 2.500h8V24H9z" fill="#fff"/></svg></div>
    </div>
    <div class="tray">
      <span class="count">5</span>
      <svg class="wifi" viewBox="0 0 18 14"><path d="M1 4.500C5.500 0 12.500 0 17 4.500L9 13.500z" fill="#8e8e96"/><path d="M4 8c3-2.500 7-2.500 10 0l-5 5.500z" fill="#fff"/></svg>
      <svg class="batt" viewBox="0 0 10 16"><path d="M3 0h4v2h3v14H0V2h3z" fill="#fff"/><path d="M5.800 3.500L2.500 9H5l-.8 4L7.500 7.500H5z" fill="#3c3c46"/></svg>
      <span class="time">3:52</span>
    </div>
  </footer>
</div>
</body>
</html>
```

FILE: styles.css
```css
* { box-sizing: border-box; }
html, body { margin: 0; padding: 0; height: 100%; overflow: hidden; background: #fff; }
.defs { position: absolute; }
.page { width: 1366px; height: 768px; display: flex; flex-direction: column; font-family: "Noto Sans", sans-serif; color: #333; overflow: hidden; }
svg { display: block; flex: none; }
.ontext { font: 700 7.5px "Liberation Sans", sans-serif; fill: #fff; }

/* Chrome tab strip */
.tabstrip { height: 33px; background: #000; display: flex; align-items: stretch; padding-left: 8px; font-family: Roboto, sans-serif; }
.tab { width: 168px; display: flex; align-items: center; padding: 0 10px 2px 12px; position: relative; color: #e8eaed; font-size: 12px; letter-spacing: .15px; }
.tab::after { content: ""; position: absolute; right: 0; top: 7px; bottom: 7px; width: 1px; background: #4a4b4f; }
.tab.active { background: #35363a; border-radius: 8px 8px 0 0; }
.tab.active::after, .tab.last-before::after { display: none; }
.fav { width: 16px; height: 16px; }
.tt { margin-left: 8px; width: 105px; white-space: nowrap; overflow: hidden; -webkit-mask-image: linear-gradient(90deg, #000 82%, transparent 100%); mask-image: linear-gradient(90deg, #000 82%, transparent 100%); }
.tx { width: 9px; height: 9px; margin-left: auto; }
.newtab { width: 13px; height: 13px; margin: 9px 0 0 16px; }
.winctl { margin-left: auto; display: flex; align-items: center; gap: 20px; padding: 0 10px 2px 0; }
.winctl svg { width: 12px; height: 12px; }

/* Omnibox row */
.omnirow { height: 35px; background: #35363a; display: flex; align-items: center; padding-left: 14px; }
.nav { width: 16px; height: 16px; margin-right: 16px; }
.omni { width: 1150px; height: 28px; margin-left: -2px; background: #202124; border-radius: 14px; display: flex; align-items: center; padding: 0 10px 0 12px; font: 14px Roboto, sans-serif; color: #9aa0a6; }
.lock { width: 10px; height: 12px; }
.url { margin-left: 12px; white-space: nowrap; letter-spacing: .01px; }
.url b { font-weight: 400; color: #e8eaed; }
.star { width: 16px; height: 16px; margin-left: auto; }
.ext { height: 16px; }
.media { width: 16px; margin-left: 14px; }
.puzzle { width: 16px; margin-left: 16px; }
.dots { width: 4px; margin-left: 23px; }

/* Bookmarks */
.bookmarks { height: 35px; background: #35363a; display: flex; align-items: center; padding: 0 0 3px 16px; gap: 16px; font: 12px Roboto, sans-serif; color: #e8eaed; }
.bm { display: flex; align-items: center; gap: 8px; white-space: nowrap; }
.bm.folder { gap: 6px; letter-spacing: .06px; }
.bm.dash { letter-spacing: .22px; }
.bm.pearson { margin-left: 1px; gap: 10px; }
.bm.home { gap: 9px; }
.bm.onshape { margin-left: 3px; }
.bm.codehs { margin-left: 1px; }

/* Onshape bars */
.appbar { height: 40px; background: #f7f7f7; display: flex; align-items: center; padding-left: 5px; }
.logo { width: 34px; height: 36px; }
.menu { width: 16px; height: 14px; margin-left: 13px; }
.branch { width: 20px; height: 18px; margin-left: 12px; }
.addfeat { width: 18px; height: 18px; margin-left: 13px; }
.title { margin: 0 0 0 16px; font-size: 22px; line-height: 1; font-weight: 600; color: #333; }
.branchname { margin: 4px 0 0 7px; font-size: 15px; color: #888; }
.cap { width: 18px; height: 16px; margin: -2px 0 0 38px; }
.appright { margin-left: auto; display: flex; align-items: center; }
.chat { width: 20px; height: 18px; margin-right: 9px; }
.btn { height: 34px; background: #fff; border: 1px solid #ccc; border-radius: 3px; font: 13px "Noto Sans", sans-serif; color: #333; padding: 0; margin-right: 8px; }
.btn:nth-of-type(1) { width: 87px; }
.btn:nth-of-type(2) { width: 125px; }
.btn.share { width: 62px; background: #1550ae; border-color: #1550ae; color: #fff; margin-right: 11px; }
.help { width: 17px; height: 17px; }
.caret { width: 0; height: 0; border: 4px solid transparent; border-top-color: #444; border-bottom: 0; margin-left: 5px; }
.avatar { width: 24px; height: 25px; margin-left: 10px; background: #3aa757; color: #000; font: 26px/25px "Noto Sans", sans-serif; text-align: center; }
.user { margin-left: 2px; font-size: 13.500px; }
.user + .caret { margin-right: 5px; margin-left: 4px; }

.toolbar { height: 37px; background: #fff; display: flex; align-items: center; }
.tb { width: 34px; height: 37px; display: flex; align-items: center; justify-content: center; }
.tb svg { width: 20px; height: 20px; }
.tc { width: 18px; height: 37px; display: flex; align-items: center; justify-content: center; }
.tc svg { width: 11px; height: 7px; }
.sep { width: 2px; height: 26px; margin: 0 1px; background: #d4d4d4; }
.tb.sketch { width: 86px; gap: 4px; font-size: 13.500px; justify-content: flex-start; padding-left: 8px; }
.tb.sketch span { margin-top: -2px; }
.search { margin-left: 11px; width: 146px; height: 30px; background: #eee; border-radius: 3px; display: flex; align-items: center; padding-left: 9px; font-size: 13.300px; white-space: nowrap; }
.search span { margin: -2px 4px 0 0; }
kbd { font: 11px "Noto Sans", sans-serif; height: 18px; line-height: 15px; padding: 0 4px; background: #f7f7f7; border: 1px solid #bbb; border-radius: 2px; margin-right: 2px; }

/* Main */
.main { flex: 1; display: flex; min-height: 0; }
.panel { width: 206px; background: #fff; border-right: 1px solid #ccc; border-top: 1px solid #ddd; font-size: 12.600px; }
.phead { height: 29px; display: flex; align-items: center; padding: 0 0 2px 4px; }
.phead strong { font-weight: 500; font-size: 12.800px; width: 131px; }
.newfolder { width: 19px; height: 15px; }
.timer { width: 18px; height: 20px; margin-left: 11px; }
.filter { height: 36px; display: flex; align-items: center; padding-left: 15px; }
.filter svg { width: 16px; height: 15px; margin-right: 12px; }
.finput { width: 145px; height: 28px; border: 1px solid #ccc; border-radius: 2px; font-style: italic; color: #888; font-size: 12.700px; line-height: 24px; padding-left: 5px; white-space: nowrap; overflow: hidden; }
.row { height: 26px; display: flex; align-items: center; white-space: nowrap; }
.row.off { color: #aaa; }
.row.off svg { opacity: .4; }
.row.head { padding-left: 5px; }
.rchev { width: 13px; height: 8px; margin-right: 5px; }
.tree { margin-left: 10px; border-left: 1px solid #ccc; position: relative; }
.tree::after { content: ""; position: absolute; left: -5px; bottom: 0; width: 10px; height: 1px; background: #ccc; }
.row.sub { padding-left: 15px; }
.rico { width: 17px; height: 17px; margin-right: 3px; }
.rico.origin { width: 10px; height: 10px; margin: 0 8px 0 2px; }
.row.feat { padding-left: 6px; }
.row.part { padding-left: 12px; }
.divider { height: 1px; background: #ccc; margin: 4px 5px 0 5px; }

.viewport { flex: 1; position: relative; background: #fff; }
.collapse { position: absolute; left: -1px; top: 229px; width: 33px; height: 34px; background: #fff; border: 1px solid #ccc; border-left: 0; display: flex; align-items: center; justify-content: center; }
.collapse svg { width: 18px; height: 18px; }
.model { position: absolute; left: 494px; top: 90px; width: 172px; height: 290px; }
.cube { position: absolute; right: 0; top: 10px; width: 171px; height: 170px; }
.cf { font: 12px Roboto, sans-serif; fill: #333; }
.ct { font: italic 8px Roboto, sans-serif; fill: #333; }
.cr { font: italic 9.500px Roboto, sans-serif; fill: #444; }
.az { font: 700 12px Roboto, sans-serif; fill: #2222dd; }
.ax { font: 700 12px Roboto, sans-serif; fill: #e23a3a; }
.ay { font: 12px Roboto, sans-serif; fill: #b9e6b4; }
.sidetools { position: absolute; right: 0; top: 196px; width: 32px; border: 1px solid #ccc; border-right: 0; background: #fff; }
.st { height: 33px; display: flex; align-items: center; justify-content: center; border-bottom: 1px solid #ccc; }
.st:last-child { border-bottom: 0; }
.st svg { width: 22px; height: 22px; }
.tape { position: absolute; left: 1097px; top: 489px; width: 17px; height: 14px; }
.scale { position: absolute; left: 1132px; top: 489px; width: 16px; height: 14px; }

/* Document tabs */
.doctabs { height: 30px; background: #d2d2d2; display: flex; align-items: flex-start; }
.dt-search { width: 17px; height: 16px; margin: 7px 0 0 8px; }
.dt-plus { width: 16px; height: 16px; margin: 6px 0 0 20px; }
.dtab { width: 200px; height: 27px; margin-left: 2px; background: #e6e6e6; border-radius: 0 0 4px 4px; display: flex; align-items: center; padding-left: 11px; gap: 4px; font-size: 13.400px; color: #777; }
.dtab svg { width: 18px; height: 18px; }
.dtab.current { margin-left: 15px; background: #fff; color: #333; border-bottom: 2px solid #1550ae; }

/* Shelf */
.shelf { height: 48px; background: #2a2a35; display: flex; align-items: center; padding-left: 8px; }
.launcher { width: 32px; height: 32px; border-radius: 50%; background: #3c3c46; display: flex; align-items: center; justify-content: center; }
.launcher i { width: 14px; height: 14px; border: 2px solid #fff; border-radius: 50%; }
.apps { margin-left: 308px; display: flex; align-items: center; height: 48px; }
.app { width: 56px; height: 48px; display: flex; align-items: center; justify-content: center; position: relative; }
.app svg { width: 34px; height: 34px; }
.app.on::after, .app.running::after { content: ""; position: absolute; bottom: 1px; left: 25px; width: 6px; height: 2px; background: #9a9aa0; }
.app.running::after { left: 23px; width: 10px; background: #fff; }
.chrome { width: 34px; height: 34px; border-radius: 50%; background: conic-gradient(from -30deg, #db4437 0 120deg, #f4c20d 120deg 240deg, #0f9d58 240deg 360deg); display: flex; align-items: center; justify-content: center; }
.chrome i { width: 16px; height: 16px; border-radius: 50%; background: #4285f4; border: 2px solid #fff; }
.illum { font: 700 5px "Liberation Sans", sans-serif; text-anchor: middle; fill: #333; }
.cd { font: 6px "Liberation Mono", monospace; text-anchor: middle; fill: #ddd; }
.shelfsep { width: 1px; height: 32px; background: #55555e; margin: 0 -1px 0 0; }
.tray { margin-left: auto; margin-right: 6px; width: 120px; height: 36px; border-radius: 18px; background: #3c3c46; display: flex; align-items: center; padding-left: 14px; color: #e8eaed; font: 14px Roboto, sans-serif; }
.count { width: 16px; height: 16px; border-radius: 50%; background: #f1f1f1; color: #333; font-size: 11px; font-weight: 500; line-height: 16px; text-align: center; }
.wifi { width: 15px; height: 13px; margin-left: 10px; }
.batt { width: 8px; height: 14px; margin-left: 9px; }
.time { margin-left: 8px; }
```
